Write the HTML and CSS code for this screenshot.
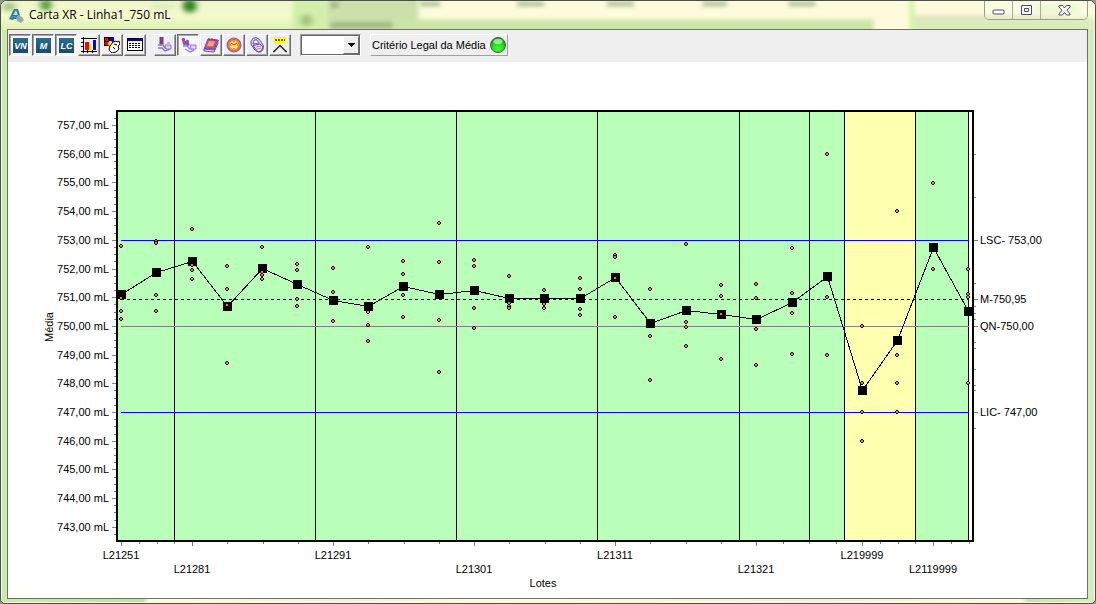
FILE: index.html
```html
<!DOCTYPE html>
<html lang="pt">
<head>
<meta charset="utf-8">
<title>Carta XR - Linha1_750 mL</title>
<link rel="stylesheet" href="styles.css">
</head>
<body>
<div class="window">
  <svg class="glass" viewBox="0 0 1096 30" preserveAspectRatio="none" aria-hidden="true">
    <defs>
      <linearGradient id="left" x1="0" y1="0" x2="0" y2="1"><stop offset="0" stop-color="#eff7cb"/><stop offset=".5" stop-color="#f4facf"/><stop offset="1" stop-color="#dcf2b2"/></linearGradient>
      <filter id="soft" x="-50%" y="-50%" width="200%" height="200%"><feGaussianBlur stdDeviation="3"/></filter>
      <filter id="softer" x="-20%" y="-50%" width="140%" height="200%"><feGaussianBlur stdDeviation="2"/></filter>
    </defs>
    <rect width="1096" height="30" fill="#fdfbdc"/>
    <rect width="300" height="30" fill="url(#left)"/>
    <g filter="url(#softer)">
      <rect x="292" y="-4" width="38" height="40" fill="#d4efab"/>
      <rect x="328" y="-4" width="90" height="40" fill="#cbe0aa"/>
      <rect x="400" y="19" width="474" height="16" fill="#cbe4a8"/>
      <rect x="910" y="-2" width="5" height="34" fill="#d0f5a4"/>
      <rect x="915" y="17" width="181" height="18" fill="#d9edba"/>
      <rect x="915" y="15" width="150" height="3" fill="#e4dcc2"/>
    </g>
    <g filter="url(#soft)">
      <circle cx="45" cy="4" r="6" fill="#4f9a38"/>
      <circle cx="189" cy="5" r="7" fill="#2c7d1c"/>
      <rect x="2" y="2" width="12" height="8" fill="#99c67e"/>
      <ellipse cx="306" cy="20" rx="6" ry="6" fill="#a3bc7f"/>
      <rect x="151" y="3" width="24" height="4" fill="#d3e5b3"/>
      <rect x="1036" y="5" width="45" height="7" fill="#e4f8c6"/>
    </g>
    <g filter="url(#softer)" fill="#9fb583">
      <rect x="330" y="1" width="8" height="6"/>
      <rect x="330" y="22" width="62" height="6"/>
      <rect x="420" y="1" width="20" height="4"/>
      <rect x="517" y="1" width="27" height="4"/>
      <rect x="607" y="1" width="27" height="4"/>
      <rect x="703" y="1" width="24" height="4"/>
      <rect x="789" y="1" width="27" height="4"/>
    </g>
  </svg>
  <header class="titlebar">
    <svg class="app-icon" viewBox="0 0 16 16" aria-hidden="true">
      <path d="M1 12 6 2h4l2 6-3 4H6l-1 1z" fill="#317a92"/>
      <path d="M5 8 8 3l2 5z" fill="#b9dce3"/>
      <path d="M10 8l4 2 2 3-3 3-4-2-1-3z" fill="#9ba8ae"/>
      <path d="M1 12c3-3 7-3 10 0" stroke="#5aa3b6" fill="none"/>
    </svg>
    <h1 class="title">Carta XR - Linha1_750 mL</h1>
    <div class="controls">
      <button class="control" aria-label="Minimizar"><svg width="13" height="11" viewBox="0 0 13 11"><rect x="1" y="5" width="11" height="4" rx="1" fill="#fff" stroke="#4c4f62"/></svg></button>
      <button class="control" aria-label="Maximizar"><svg width="13" height="11" viewBox="0 0 13 11"><path d="M1.500.500h10v9h-10zM4.500 3.500h4v3h-4z" fill="#fff" fill-rule="evenodd" stroke="#4c4f62"/></svg></button>
      <button class="control control-close" aria-label="Fechar"><svg width="13" height="11" viewBox="0 0 13 11"><path d="M1 .500h3.500l2 2.500 2-2.500H12v1.500L9 5.200 12 9v1H8.500l-2-2.500-2 2.500H1V9l3-3.800L1 2z" fill="#fff" stroke="#4c4f62"/></svg></button>
    </div>
  </header>
  <main class="client">
    <div class="toolbar" role="toolbar" aria-label="Ferramentas">
      <div class="group">
        <button class="tool pressed"><span class="badge">VN</span></button>
        <button class="tool pressed"><span class="badge">M</span></button>
        <button class="tool pressed"><span class="badge">LC</span></button>
        <button class="tool" aria-label="Gráfico"><svg class="icon" viewBox="0 0 16 16" shape-rendering="crispEdges"><path d="M2.500 0v16M0 14.500h16M0 1.500h16M0 5.500h3M0 9.500h3M6.500 13v3M11.500 13v3" stroke="#000" fill="none"/><path d="M4 5h4v8H4z" fill="#f00"/><path d="M8 8h4v5H8z" fill="#ff0"/><path d="M12 3h3v10h-3z" fill="#00f"/></svg></button>
        <button class="tool" aria-label="Formas"><svg class="icon" viewBox="0 0 16 16"><path d="M0 0h10v9H0z"/><path d="M1 1h3v3H1z" fill="#f00"/><path d="M6 1h4v4H6z" fill="#00f"/><path d="M1 5h3v3H1z" fill="#f00"/><circle cx="6.500" cy="6.500" r="2.500" fill="#ff0"/><path d="m9 5 3-1 1 1 2-1 1 3-2 2 1 3-3 3-4 1-3-3 1-4z" fill="#fff" stroke="#000"/><path d="m9 10 2 2M10 7l3 1" stroke="#000"/></svg></button>
        <button class="tool" aria-label="Tabela"><svg class="icon" viewBox="0 0 16 16" shape-rendering="crispEdges"><path d="M0 1h16v13H0z"/><path d="M1 4h14v9H1z" fill="#fff"/><path d="M1 2h14v2H1z" fill="#0000b8"/><path d="M2 6.500h12M2 8.500h12M2 10.500h12" stroke="#000" stroke-dasharray="2 1"/></svg></button>
      </div>
      <div class="group">
        <button class="tool" aria-label="Amostra"><svg class="icon" viewBox="0 0 16 16" fill="none"><path d="M3 0h3v7H3z" fill="#b8294d" stroke="#5346c8"/><path d="M1 8h5l2 3 5-1M1 11h4l3 3 5-2" stroke="#8b70dc" stroke-width="1.400"/><path d="M8 8h6v4H9zM10 6h3" fill="#e5dcff" stroke="#8b70dc"/><path d="M10 9h3" stroke="#e7b84d"/></svg></button>
        <button class="tool pressed" aria-label="Amostras"><svg class="icon" viewBox="0 0 16 16" fill="none"><path d="m1 1 2-1 2 6-2 1zM5 3l2-1 1 5-2 1z" fill="#b94a7d" stroke="#6655cf"/><path d="M2 8h4l3 3 6-1M4 11l5 3 4-2" stroke="#9a80df" stroke-width="1.400"/><path d="M9 7h6v4h-5z" fill="#e5dcff" stroke="#8b70dc"/><path d="M11 8h3" stroke="#e7b84d"/></svg></button>
        <button class="tool" aria-label="Livro"><svg class="icon" viewBox="0 0 16 16"><path d="m5 2 10 1-4 9H1z" fill="#d8486a" stroke="#7049c7"/><path d="m6 4 6 .5-2 5-6-.5z" fill="#f6a583"/><path d="m1 12 10 1 4-10v3l-4 9-10-1z" fill="#f8eaff" stroke="#5846c4"/><path d="M6 1v2M9 1v2M12 2v2" stroke="#623abb"/></svg></button>
        <button class="tool" aria-label="Relógio"><svg class="icon" viewBox="0 0 16 16"><circle cx="8" cy="8" r="7" fill="#f0683a" stroke="#7857d5"/><circle cx="8" cy="8" r="4.800" fill="#ffe066" stroke="#f58a23"/><path d="M5 6l3 2 3-2M8 4v1M8 11v1M4 8h1M11 8h1" stroke="#c0392b" fill="none"/></svg></button>
        <button class="tool" aria-label="Cadeado"><svg class="icon" viewBox="0 0 16 16"><path d="M2 6c0-4 3-6 6-5 3 1 4 4 6 7 1 3 0 6-3 7-3 0-6-2-7-5-1-1-2-2-2-4z" fill="#d9ccff" stroke="#5c43ca"/><path d="m4 7 1-4 3 0 2 3z" fill="#fff" stroke="#6c55ce"/><path d="M4 8.500 11 7l3 3-2 4-3 1z" fill="#ece4ff" stroke="#5c43ca"/><path d="m7 10 5-1M8 12l4-1" stroke="#e07a74"/></svg></button>
        <button class="tool" aria-label="Limites"><svg class="icon" viewBox="0 0 16 16"><path d="M2 0h12v7H2z" fill="#ff0"/><path d="M3 3h10" stroke="#776b00" stroke-width="2" stroke-dasharray="2 1"/><path d="M1 14.500h1l6-6 6 6h1" fill="none" stroke="#222" stroke-width="1.400"/></svg></button>
      </div>
      <div class="combo">
        <select class="combo-select" aria-label="Selecionar"><option></option></select>
        <span class="combo-arrow"><svg width="7" height="4" viewBox="0 0 7 4" shape-rendering="crispEdges"><path d="M0 0h7L3.500 4z"/></svg></span>
      </div>
      <div class="status"><span>Critério Legal da Média</span>
        <svg class="led" viewBox="0 0 16 16" aria-hidden="true"><defs><radialGradient id="led" cx=".5" cy=".75" r=".7"><stop offset="0" stop-color="#4cff3c"/><stop offset=".6" stop-color="#25cf20"/><stop offset="1" stop-color="#148a16"/></radialGradient></defs><circle cx="8" cy="8" r="7.500" fill="url(#led)" stroke="#3f6b3f"/><ellipse cx="8" cy="4.500" rx="4.500" ry="2.800" fill="#b9f7ae" opacity=".75"/></svg>
      </div>
    </div>
    <svg class="chart" id="chart" viewBox="8 62 1079 536" role="img" aria-label="Carta de médias por lote"></svg>
  </main>
</div>
<script src="chart.js"></script>
</body>
</html>
```

FILE: styles.css
```css
* { box-sizing: border-box; }
html { background: #8f9a8a; }
body { margin: 0; font-family: "Liberation Sans", Arial, sans-serif; font-size: 11px; color: #000; }
button { font: inherit; padding: 0; }

.window {
  position: relative;
  display: flex;
  flex-direction: column;
  min-height: 100vh;
  padding: 0 7px 4px 6px;
  overflow: hidden;
  border: 1px solid #4c5148;
  border-radius: 7px 7px 5px 5px;
  background: linear-gradient(90deg, #cde7ae 0, #c6dfa8 142px, #fefce0 148px, #f5f2dc 340px, #fefce0 500px, #f5f2dc 820px, #fefce0 1020px, #cbe5b0 1027px, #d3eeb8 100%);
  box-shadow: inset 0 0 0 1px #f2fbe6;
}
.glass { position: absolute; top: 0; left: 0; width: 100%; height: 29px; }

.titlebar { position: relative; display: flex; height: 28px; padding-left: 1px; }
.app-icon { width: 16px; height: 16px; margin-top: 6px; }
.title {
  flex: 1;
  margin: 0 0 0 5px;
  font: 400 12px/28px "Open Sans", "Noto Sans", sans-serif;
}
.controls {
  display: flex;
  height: 19px;
  border: 1px solid #9a9f8c;
  border-top: 0;
  border-radius: 0 0 5px 5px;
}
.control {
  display: flex;
  align-items: center;
  justify-content: center;
  width: 28px;
  border: 0;
  border-right: 1px solid #a9ae9b;
  background: rgba(255, 255, 255, 0.2);
}
.control-close { width: 46px; border-right: 0; }

.client {
  position: relative;
  flex: 1;
  border: 1px solid #6d7368;
  background: #fff;
}
.toolbar {
  display: flex;
  align-items: center;
  height: 32px;
  padding: 0 1px 2px;
  background: #efefef;
}
.group { display: flex; gap: 1px; margin-right: 8px; }
.tool {
  display: flex;
  align-items: center;
  justify-content: center;
  width: 22px;
  height: 22px;
  border: 1px solid;
  border-color: #fff #6d6d6d #6d6d6d #fff;
  box-shadow: inset -1px -1px #a5a5a5;
  background: #efefef;
}
.pressed {
  padding: 1px 0 0 1px;
  border-color: #6d6d6d #fff #fff #6d6d6d;
  box-shadow: inset 1px 1px #a5a5a5;
  background: #f7f7f7;
}
.icon { width: 16px; height: 16px; }
.badge {
  width: 15px;
  height: 15px;
  background: linear-gradient(#2b6c94, #174a6b);
  color: #fff;
  font: italic 700 9px/16px "Liberation Sans", Arial, sans-serif;
  text-align: center;
}
.combo {
  position: relative;
  width: 61px;
  height: 22px;
  margin-left: 1px;
  border: 1px solid;
  border-color: #9a9a9a #fff #fff #9a9a9a;
}
.combo-select {
  display: block;
  width: 100%;
  height: 100%;
  border: 1px solid #696969;
  border-radius: 0;
  background: #fff;
  appearance: none;
}
.combo-arrow {
  position: absolute;
  top: 1px;
  right: 1px;
  display: flex;
  align-items: center;
  justify-content: center;
  width: 16px;
  height: 18px;
  border: 1px solid;
  border-color: #fff #6d6d6d #6d6d6d #fff;
  background: #efefef;
  pointer-events: none;
}
.status {
  display: flex;
  align-items: center;
  gap: 4px;
  height: 22px;
  margin-left: 9px;
  padding: 0 1px;
  border: 1px solid;
  border-color: #fff #a0a0a0 #a0a0a0 #fff;
}
.led { width: 16px; height: 16px; }

.chart { display: block; width: 100%; height: auto; }
.chart text { font-size: 11px; }
.chart .end { text-anchor: end; }
.chart .mid { text-anchor: middle; }
.zone { fill: #b9ffb9; }
.zone-alert { fill: #ffffb0; }
.frame { fill: none; stroke: #000; stroke-width: 2; }
.divider { fill: none; stroke: #000; }
.limit { stroke: #00f; }
.nominal { stroke: #808080; }
.mean { stroke: #000; stroke-dasharray: 3 3; }
.tick { fill: none; stroke: #808080; }
.series { fill: none; stroke: #000; }
.sample { fill: #ff8000; }
```

FILE: chart.js
```js
const chart = document.getElementById('chart');
const parts = [];
const path = (cls, d) => parts.push(`<path class="${cls}" d="${d}" shape-rendering="crispEdges"/>`);
const text = (cls, x, y, s, extra = '') => parts.push(`<text class="${cls}" x="${x}" y="${y}" ${extra}>${s}</text>`);

// Each lot: x position, mean, individual samples.
const lots = [
  [121, 294, [246, 298, 311, 319]],
  [156, 272, [241, 243, 295, 311]],
  [192, 261, [229, 265, 270, 279]],
  [227, 306, [266, 289, 305, 363]],
  [262, 268, [247, 272, 275, 279]],
  [297, 284, [264, 270, 299, 306]],
  [333, 300, [268, 292, 321]],
  [368, 306, [247, 312, 325, 341]],
  [403, 286, [261, 274, 295, 317]],
  [439, 294, [223, 262, 320, 372]],
  [474, 290, [260, 266, 308, 328]],
  [509, 298, [276, 303, 306, 308]],
  [544, 298, [290, 304, 308]],
  [580, 298, [278, 289, 309, 315]],
  [615, 277, [255, 257, 278, 317]],
  [650, 323, [289, 336, 380]],
  [686, 310, [244, 322, 327, 346]],
  [721, 314, [285, 296, 314, 359]],
  [756, 319, [284, 298, 329, 365]],
  [792, 302, [248, 293, 313, 354]],
  [827, 276, [154, 297, 355]],
  [862, 390, [326, 383, 412, 441]],
  [897, 340, [211, 355, 383, 412]],
  [933, 247, [183, 269]],
  [968, 311, [269, 294, 297, 383]]
];

path('zone', 'M117 112H969V541H117z');
path('zone-alert', 'M845 112H915V541H845z');
path('divider', [174, 315, 456, 597, 739, 809, 844, 915, 968].map(x => `M${x}.5 112V541`).join(''));
path('limit', 'M121 240.5H969M121 412.5H969');
path('nominal', 'M121 326.5H969');
path('mean', 'M121 299.5H969');
path('frame', 'M117 111H973V541H117z');

let ticks = '';
for (let i = 0; i < 15; i++) {
  const y = Math.round(125 + i * 28.7);
  ticks += `M112 ${y}.5h4`;
  text('end', 109, y + 4, `${757 - i},00 mL`);
}
for (let i = -1; i < 58; i++) {
  if (i % 4) ticks += `M114 ${Math.round(125 + i * 28.7 / 4)}.5h2`;
}
const labels = [[121, 'L21251'], [192, 'L21281'], [333, 'L21291'], [474, 'L21301'],
  [615, 'L21311'], [756, 'L21321'], [862, 'L219999'], [933, 'L2119999']];
labels.forEach(([x, s], i) => {
  const next = i < 7 ? labels[i + 1][0] : 1004;
  ticks += `M${x}.5 542v4`;
  for (let k = 1; k < 4; k++) {
    const m = Math.round(x + (next - x) * k / 4);
    if (m < 973) ticks += `M${m}.5 542v2`;
  }
  text('mid', x, i % 2 ? 573 : 559, s);
});
[154, 197, 283, 306, 313, 319, 342, 348, 369, 385, 390, 428].forEach(y => { ticks += `M974 ${y}.5h2`; });
[[240, 'LSC- 753,00'], [299, 'M-750,95'], [326, 'QN-750,00'], [412, 'LIC- 747,00']].forEach(([y, s]) => {
  ticks += `M974 ${y}.5h4`;
  text('', 980, y + 4, s);
});
path('tick', ticks);
text('mid', 543, 587, 'Lotes');
text('mid', 0, 0, 'Média', 'transform="translate(53 327) rotate(-90)"');

path('series', 'M' + lots.map(([x, y]) => `${x}.5 ${y}.5`).join('L'));
path('marker', lots.map(([x, y]) => `M${x - 4} ${y - 4}h9v9h-9z`).join(''));
const all = lots.flatMap(([x, , ys]) => ys.map(y => [x, y]));
all.forEach(([x, y]) => {
  path('ring', `M${x - 1} ${y - 2}h2v1h1v2h-1v1h-2v-1h-1v-2h1z`);
  path('sample', `M${x - 1} ${y - 1}h2v2h-2z`);
});
chart.innerHTML = parts.join('');
```
